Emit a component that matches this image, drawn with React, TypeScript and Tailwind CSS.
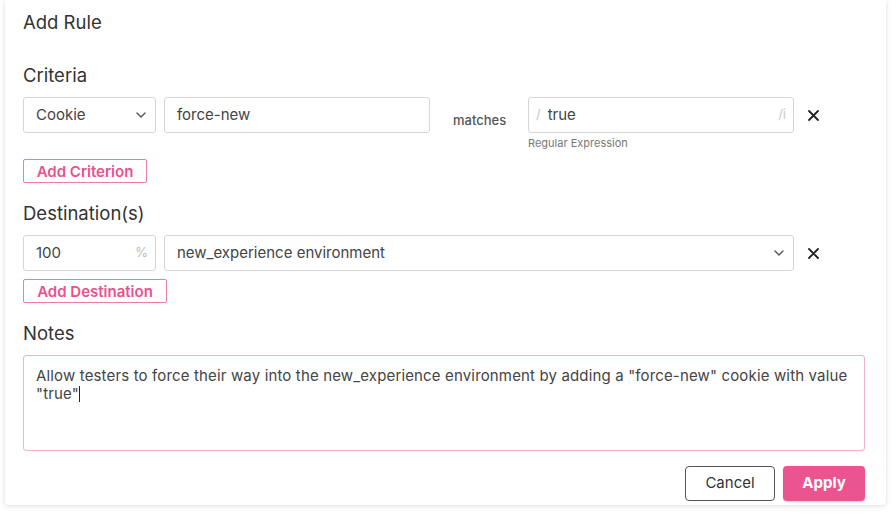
import React from "react";

const Chevron = () => (
  <svg width="10" height="6" viewBox="0 0 10 6" fill="none">
    <path d="M1 1l4 4 4-4" stroke="#555" strokeWidth="1.4" strokeLinecap="round" strokeLinejoin="round" />
  </svg>
);

const Close = () => (
  <svg width="11" height="11" viewBox="0 0 11 11" fill="none">
    <path d="M1 1l9 9M10 1l-9 9" stroke="#222" strokeWidth="1.8" strokeLinecap="round" />
  </svg>
);

export default function App() {
  return (
    <div
      className="w-[895px] h-[520px] bg-white pl-[5px] pr-[9px] pb-[15px]"
      style={{ fontFamily: "Inter, 'Noto Sans', sans-serif" }}
    >
      <div className="h-[505px] w-[881px] bg-white rounded-b-[4px] shadow-[0_1px_5px_rgba(0,0,0,0.14)] pl-[18px] pr-[21px] text-[#333]">
        <div className="pt-[10px] text-[18.5px] leading-[24px]">Add Rule</div>

        <div className="mt-[29px] text-[18.5px] leading-[24px]">Criteria</div>
        <div className="mt-[10px] flex items-start">
          <div className="w-[133px] h-[36px] border border-[#d6d6d6] rounded-[3px] flex items-center justify-between pl-[12px] pr-[9px] text-[15px] text-[#444]">
            <span>Cookie</span>
            <Chevron />
          </div>
          <div className="ml-[8px] w-[266px] h-[36px] border border-[#d6d6d6] rounded-[3px] flex items-center pl-[12px] text-[15px] text-[#444]">
            force-new
          </div>
          <div className="ml-[23px] w-[53px] h-[48px] flex items-center text-[13px] font-medium text-[#555]">matches</div>
          <div className="ml-[22px] flex flex-col">
            <div className="w-[266px] h-[36px] border border-[#d6d6d6] rounded-[3px] flex items-center pl-[7px] pr-[7px] text-[15px] text-[#444]">
              <span className="text-[#c8c8c8] text-[13px]">/</span>
              <span className="ml-[7px]">true</span>
              <span className="ml-auto text-[#c8c8c8] text-[13px]">/i</span>
            </div>
            <div className="mt-[3px] text-[11px] leading-[14px] text-[#777]">Regular Expression</div>
          </div>
          <div className="ml-[14px] h-[36px] flex items-center">
            <Close />
          </div>
        </div>
        <div className="mt-[9px] flex">
          <button className="h-[24px] w-[124px] border border-[#ee7aa7] rounded-[2px] text-[15px] font-semibold text-[#e9528e] leading-none">
            Add Criterion
          </button>
        </div>

        <div className="mt-[18px] text-[18.5px] leading-[24px]">Destination(s)</div>
        <div className="mt-[10px] flex items-center">
          <div className="w-[133px] h-[36px] border border-[#d6d6d6] rounded-[3px] flex items-center justify-between pl-[12px] pr-[7px] text-[15px] text-[#444]">
            <span>100</span>
            <span className="text-[#bbb] text-[13px]">%</span>
          </div>
          <div className="ml-[8px] w-[630px] h-[36px] border border-[#d6d6d6] rounded-[3px] flex items-center justify-between pl-[12px] pr-[9px] text-[15px] text-[#444]">
            <span>new_experience environment</span>
            <Chevron />
          </div>
          <div className="ml-[14px] flex items-center">
            <Close />
          </div>
        </div>
        <div className="mt-[8px] flex">
          <button className="h-[24px] w-[144px] border border-[#ee7aa7] rounded-[2px] text-[15px] font-semibold text-[#e9528e] leading-none">
            Add Destination
          </button>
        </div>

        <div className="mt-[18px] text-[18.5px] leading-[24px]">Notes</div>
        <div className="mt-[10px] h-[96px] w-full border border-[#f2b0ca] rounded-[3px] px-[12px] pt-[11px] text-[15px] leading-[18px] tracking-[0.15px] text-[#444]">
          Allow testers to force their way into the new_experience environment by adding a "force-new" cookie with value
          <br />
          "true"<span className="inline-block w-[1px] h-[16px] bg-[#222] align-[-3px]" />
        </div>

        <div className="mt-[15px] flex justify-end gap-[8px]">
          <button className="w-[90px] h-[35px] border border-[#555] rounded-[4px] text-[15px] text-[#333]">Cancel</button>
          <button className="w-[82px] h-[35px] bg-[#ea5590] rounded-[4px] text-[15px] font-bold text-white shadow-[0_1px_2px_rgba(0,0,0,0.15)]">
            Apply
          </button>
        </div>
      </div>
    </div>
  );
}
